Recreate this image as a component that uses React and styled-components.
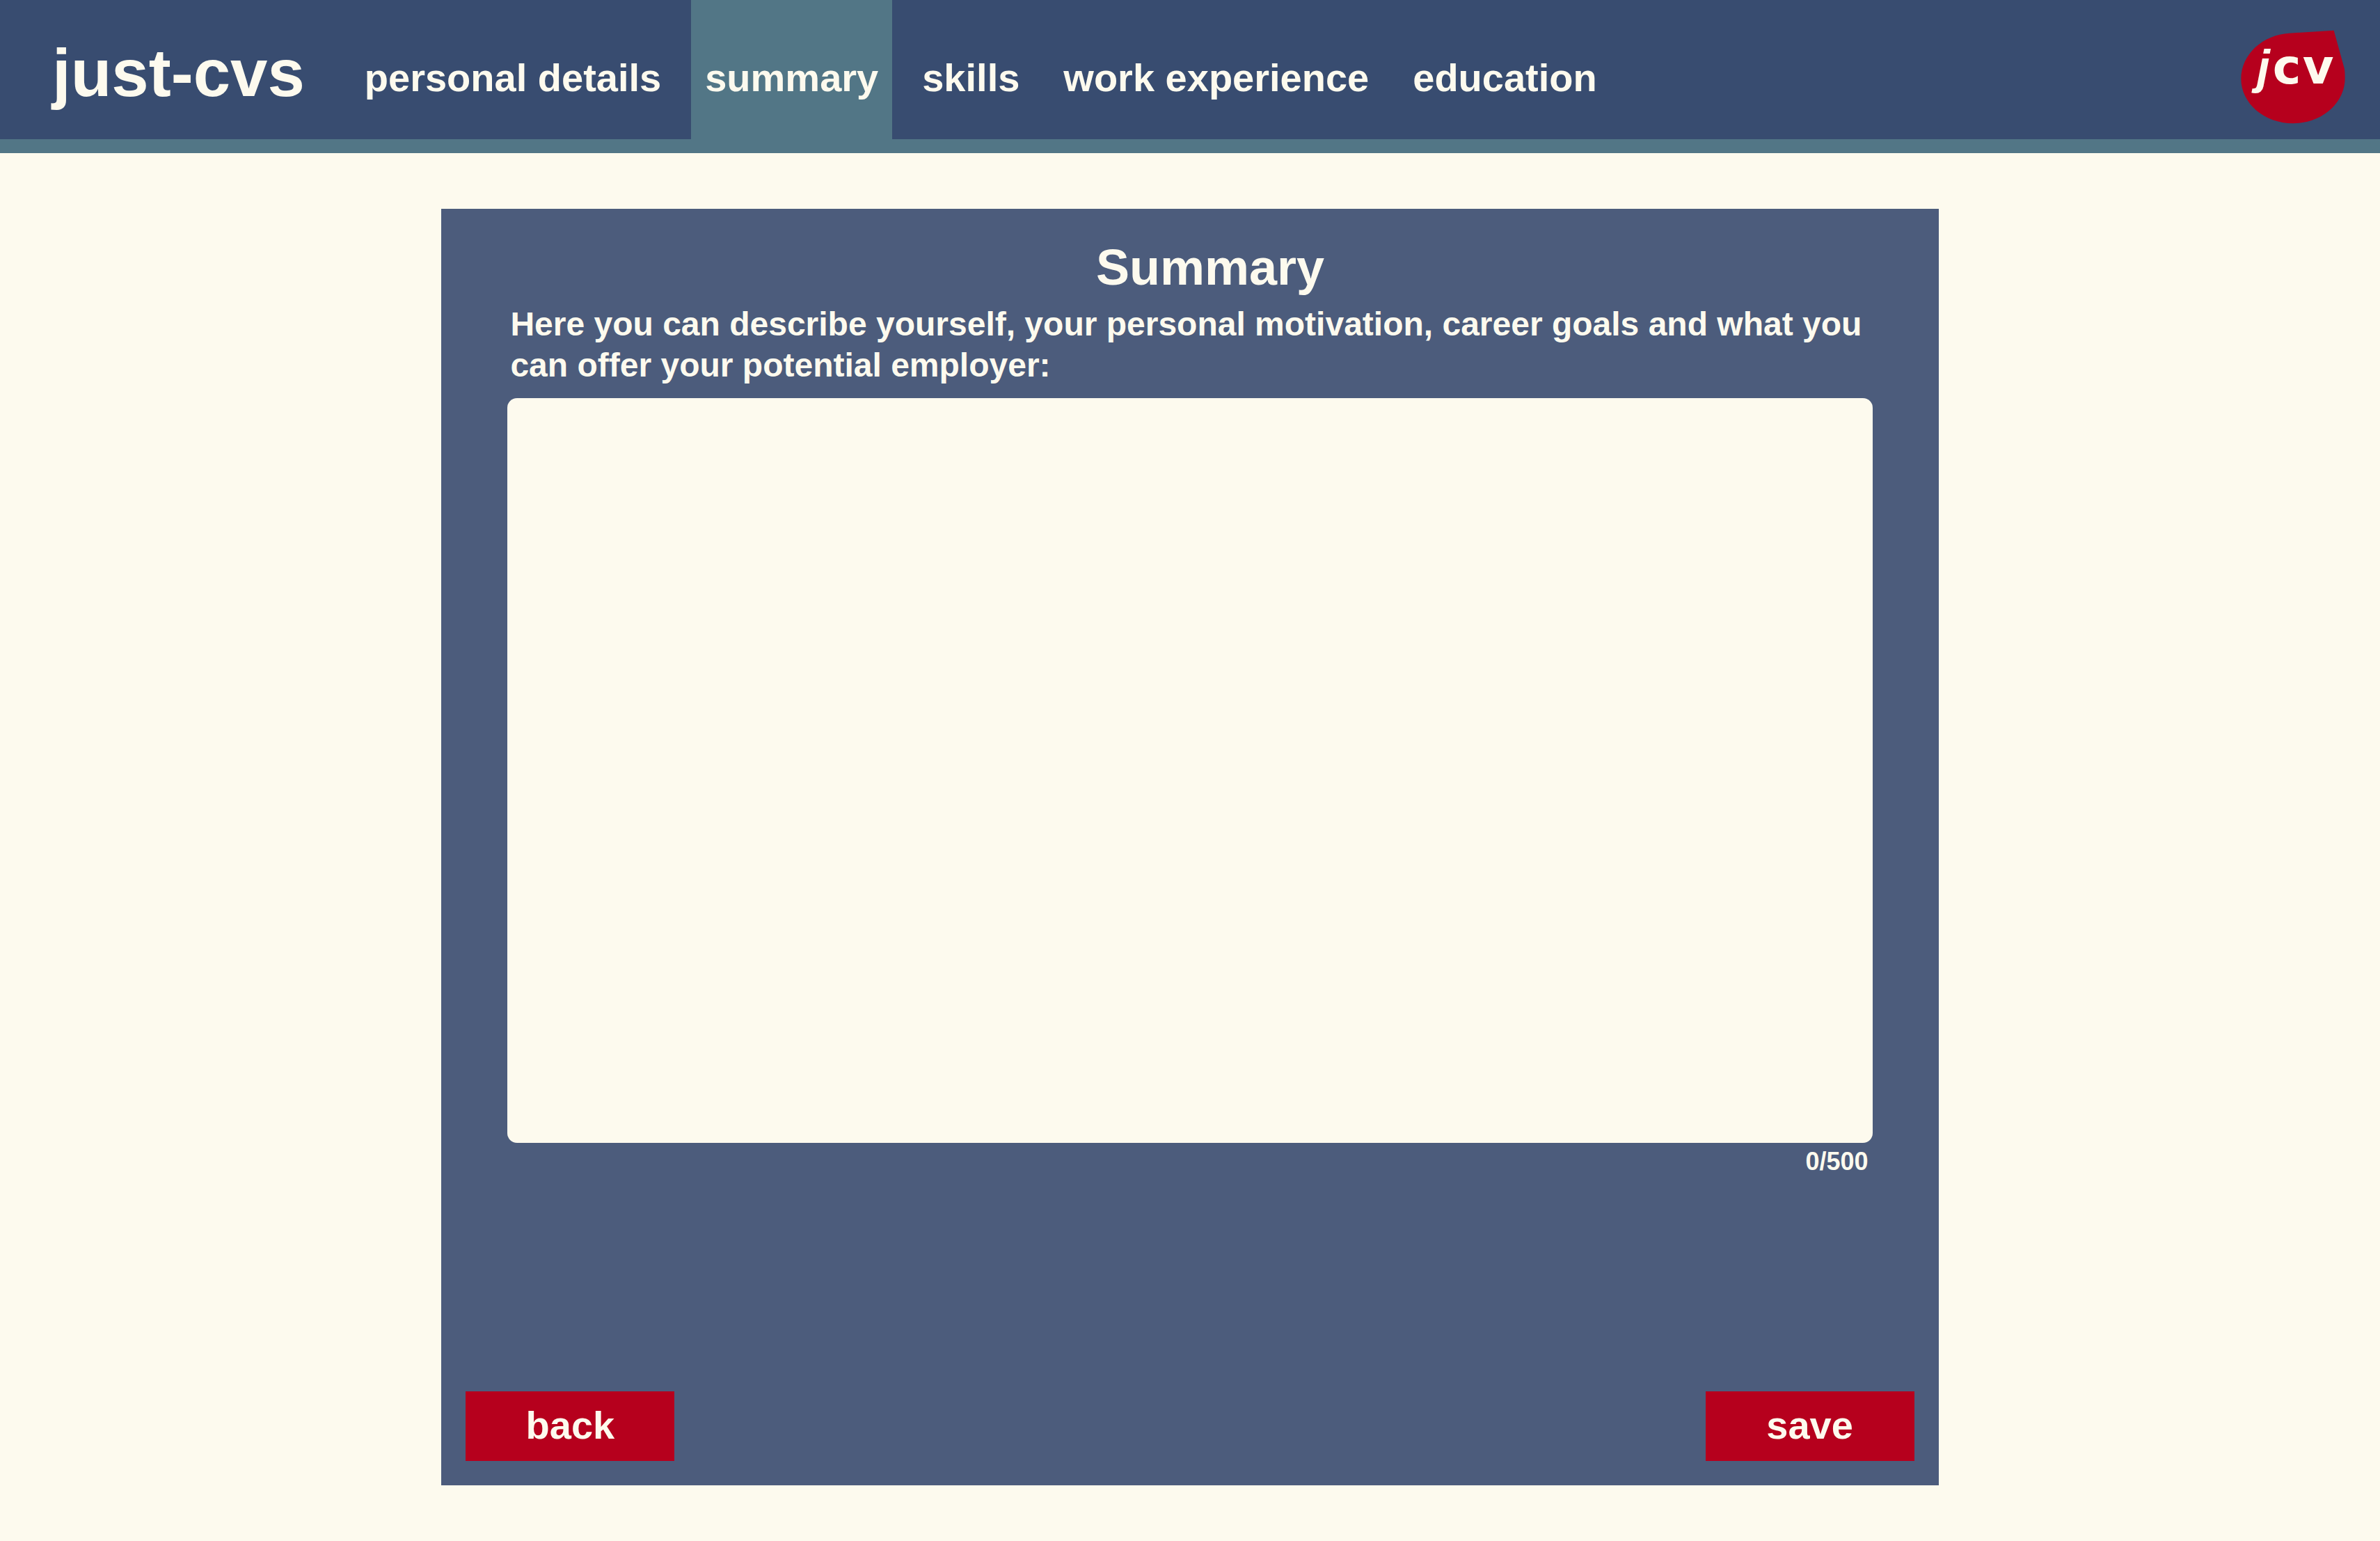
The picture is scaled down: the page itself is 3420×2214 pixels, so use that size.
import React, { useState } from 'react';
import styled, { createGlobalStyle } from 'styled-components';

const navy = '#384c70';
const slate = '#4c5c7c';
const teal = '#527686';
const cream = '#fdfaee';
const red = '#b6001d';

const GlobalStyle = createGlobalStyle`
  * { box-sizing: border-box; }
  body {
    margin: 0;
    background: ${cream};
    color: ${cream};
    font-family: "Helvetica Neue", "Liberation Sans", Arial, sans-serif;
    font-weight: 700;
  }
`;

const Page = styled.div`
  display: flex;
  flex-direction: column;
  min-height: 100vh;
`;

const Header = styled.header`
  display: flex;
  align-items: stretch;
  padding: 0 50px 0 75px;
  background: ${navy};
  border-bottom: 20px solid ${teal};
`;

const Brand = styled.a`
  display: flex;
  align-items: center;
  padding-top: 10px;
  margin-right: 66px;
  font-size: 96px;
  line-height: 110px;
  color: inherit;
  text-decoration: none;
  white-space: nowrap;
`;

const Nav = styled.nav`
  display: flex;
  flex: 1;
  gap: 23px;
`;

const NavLink = styled.a`
  display: flex;
  align-items: center;
  padding: 80px 20px 56px;
  font-size: 56px;
  line-height: 64px;
  color: inherit;
  text-decoration: none;
  white-space: nowrap;
  background: ${(p) => (p.$active ? teal : 'transparent')};
`;

const LogoLink = styled.a`
  display: flex;
  align-items: center;
  padding-top: 20px;

  svg {
    display: block;
    width: 150px;
    height: 135px;
  }

  text {
    font-family: "DejaVu Sans", Verdana, sans-serif;
    font-size: 206px;
    font-weight: 700;
    fill: ${cream};
  }

  .slanted {
    font-family: "Liberation Sans", Arial, sans-serif;
    font-style: italic;
  }
`;

const Main = styled.main`
  display: flex;
  flex: 1;
  justify-content: center;
  padding: 80px 0;
`;

const Card = styled.form`
  display: flex;
  flex-direction: column;
  width: 62.9%;
  padding: 42px 35px 35px;
  background: ${slate};
`;

const Section = styled.section`
  display: flex;
  flex-direction: column;
  padding: 0 60px;
`;

const Title = styled.h1`
  margin: 0 0 10px;
  padding-left: 58px;
  font-size: 72px;
  line-height: 84px;
  text-align: center;
`;

const Label = styled.label`
  margin-bottom: 18px;
  padding-left: 4px;
  font-size: 48px;
  line-height: 59px;
`;

const TextArea = styled.textarea`
  display: block;
  width: 100%;
  height: 1070px;
  padding: 24px;
  border: 0;
  border-radius: 14px;
  outline: 0;
  resize: none;
  background: ${cream};
  color: ${navy};
  font: inherit;
  font-size: 48px;
`;

const Counter = styled.output`
  padding-right: 6px;
  font-size: 36px;
  line-height: 54px;
  text-align: right;
`;

const Actions = styled.footer`
  display: flex;
  justify-content: space-between;
  margin-top: auto;
`;

const Button = styled.button`
  width: 300px;
  height: 100px;
  padding: 0 0 2px;
  border: 0;
  background: ${red};
  color: inherit;
  font: inherit;
  font-size: 56px;
  line-height: 64px;
  cursor: pointer;
`;

const links = ['personal details', 'summary', 'skills', 'work experience', 'education'];
const limit = 500;

function Logo() {
  return (
    <svg viewBox="120 128 450 403" role="img" aria-label="jcv">
      <path
        fill={red}
        d="M521 129L566 292C569 305 569 325 569 335C569 443 469 530 345 530C221 530 121 443 121 338C121 232 215 147 330 141Z"
      />
      <text y="359">
        <tspan className="slanted" x="188">j</tspan>
        <tspan x="257">c</tspan>
        <tspan x="386">v</tspan>
      </text>
    </svg>
  );
}

export default function App() {
  const [summary, setSummary] = useState('');

  return (
    <Page>
      <GlobalStyle />
      <Header>
        <Brand href="#home">just-cvs</Brand>
        <Nav>
          {links.map((name) => (
            <NavLink key={name} href={`#${name.replace(' ', '-')}`} $active={name === 'summary'}>
              {name}
            </NavLink>
          ))}
        </Nav>
        <LogoLink href="#top">
          <Logo />
        </LogoLink>
      </Header>
      <Main>
        <Card onSubmit={(e) => e.preventDefault()}>
          <Section>
            <Title>Summary</Title>
            <Label htmlFor="summary-text">
              Here you can describe yourself, your personal motivation, career goals and what you can
              offer your potential employer:
            </Label>
            <TextArea
              id="summary-text"
              maxLength={limit}
              value={summary}
              onChange={(e) => setSummary(e.target.value)}
            />
            <Counter htmlFor="summary-text">{`${summary.length}/${limit}`}</Counter>
          </Section>
          <Actions>
            <Button type="button">back</Button>
            <Button type="submit">save</Button>
          </Actions>
        </Card>
      </Main>
    </Page>
  );
}
